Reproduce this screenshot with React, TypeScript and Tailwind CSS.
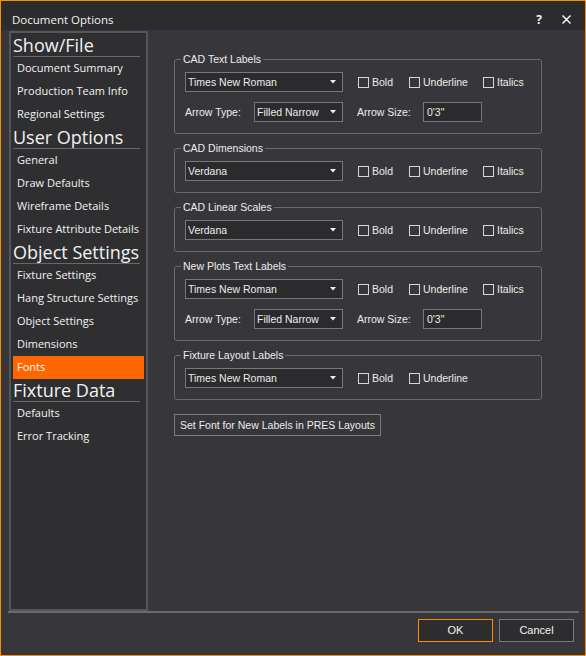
import React from 'react';

const sideGroups = [
  { title: 'Show/File', items: ['Document Summary', 'Production Team Info', 'Regional Settings'] },
  { title: 'User Options', items: ['General', 'Draw Defaults', 'Wireframe Details', 'Fixture Attribute Details'] },
  { title: 'Object Settings', items: ['Fixture Settings', 'Hang Structure Settings', 'Object Settings', 'Dimensions', 'Fonts'] },
  { title: 'Fixture Data', items: ['Defaults', 'Error Tracking'] },
];

const Combo: React.FC<{ width: string; text: string }> = ({ width, text }) => (
  <div className={`${width} h-[20px] flex items-center justify-between pl-[2px] pr-[6px] bg-[#2b2b2d] border border-[#787878]`}>
    <span className="truncate">{text}</span>
    <svg width="6" height="4" viewBox="0 0 6 4" className="shrink-0">
      <path d="M0 0 H6 L3 3.5 Z" fill="#f0f0f0" />
    </svg>
  </div>
);

const Check: React.FC<{ label: string; width?: string }> = ({ label, width = '' }) => (
  <label className={`${width} flex items-center gap-[3px]`}>
    <span className="w-[11px] h-[11px] border border-[#d6d6d6]" />
    <span>{label}</span>
  </label>
);

const FontRow: React.FC<{ font: string; italics?: boolean }> = ({ font, italics = true }) => (
  <div className="flex items-center h-[20px]">
    <Combo width="w-[158px]" text={font} />
    <div className="flex items-center ml-[15px]">
      <Check label="Bold" width="w-[51px]" />
      <Check label="Underline" width="w-[74px]" />
      {italics && <Check label="Italics" />}
    </div>
  </div>
);

const ArrowRow: React.FC = () => (
  <div className="flex items-center h-[20px]">
    <span className="w-[69px]">Arrow Type:</span>
    <Combo width="w-[89px]" text="Filled Narrow" />
    <span className="ml-[14px] w-[66px]">Arrow Size:</span>
    <div className="w-[59px] h-[20px] flex items-center pl-[3px] bg-[#2b2b2d] border border-[#787878]">0'3"</div>
  </div>
);

const GroupBox: React.FC<{ title: string; children: React.ReactNode }> = ({ title, children }) => (
  <div className="relative w-[368px] border border-[#6a6a6a] rounded-[3px] pt-[12px] pb-[11px] pl-[10px] flex flex-col gap-[10px]">
    <span className="absolute -top-[7px] left-[6px] px-[2px] leading-[13px] bg-[#37373b]">{title}</span>
    {children}
  </div>
);

export default function App() {
  return (
    <div className="w-[586px] h-[656px] flex flex-col bg-[#37373b] border border-[#ff8c00] text-[#f2f2f2] overflow-hidden">
      {/* title bar */}
      <div className="h-[29px] shrink-0 flex items-center bg-[#2c2c2f] pt-[8px] pl-[11px] pr-[14px]" style={{ fontFamily: '"Open Sans", sans-serif' }}>
        <span className="text-[11.5px] flex-1">Document Options</span>
        <span className="text-[12px] font-bold mr-[20px]">?</span>
        <svg width="9" height="9" viewBox="0 0 9 9">
          <path d="M0.5 0.5 L8.5 8.5 M8.5 0.5 L0.5 8.5" stroke="#ffffff" strokeWidth="1.4" />
        </svg>
      </div>

      {/* body */}
      <div className="h-[583px] shrink-0 flex ml-[7px] mr-[6px] border-b-2 border-[#6b6b6b]">
        <aside
          className="w-[139px] ml-[1px] mt-[1px] pt-[1px] bg-[#2f2f31] border-2 border-[#565658] flex flex-col"
          style={{ fontFamily: '"Open Sans", sans-serif' }}
        >
          {sideGroups.map((g) => (
            <div key={g.title} className="flex flex-col">
              <div className="h-[23px] ml-[2px] mr-[6px] border-b border-[#68686a] text-[18px] leading-[22px] whitespace-nowrap">
                {g.title}
              </div>
              {g.items.map((it) => (
                <div
                  key={it}
                  className={`h-[23px] mx-[2px] pl-[4px] flex items-center text-[11px] whitespace-nowrap ${
                    it === 'Fonts' ? 'bg-[#ff6600] text-white' : ''
                  }`}
                >
                  {it}
                </div>
              ))}
            </div>
          ))}
        </aside>

        <main
          className="flex-1 pl-[26px] pt-[29px] flex flex-col gap-[14px] text-[10.5px] leading-[13px] text-[#ececec]"
          style={{ fontFamily: '"Liberation Sans", Arial, sans-serif' }}
        >
          <GroupBox title="CAD Text Labels">
            <FontRow font="Times New Roman" />
            <ArrowRow />
          </GroupBox>
          <GroupBox title="CAD Dimensions">
            <FontRow font="Verdana" />
          </GroupBox>
          <GroupBox title="CAD Linear Scales">
            <FontRow font="Verdana" />
          </GroupBox>
          <GroupBox title="New Plots Text Labels">
            <FontRow font="Times New Roman" />
            <ArrowRow />
          </GroupBox>
          <GroupBox title="Fixture Layout Labels">
            <FontRow font="Times New Roman" italics={false} />
          </GroupBox>
          <div className="self-start h-[22px] px-[5px] flex items-center border border-[#7c7c7c] bg-[#37373b]">
            Set Font for New Labels in PRES Layouts
          </div>
        </main>
      </div>

      {/* footer */}
      <div
        className="flex-1 flex justify-end items-start pt-[6px] pr-[11px] gap-[6px] text-[11px]"
        style={{ fontFamily: '"Liberation Sans", Arial, sans-serif' }}
      >
        <button className="w-[75px] h-[23px] border border-[#ff8c00] bg-[#2d2d30]">OK</button>
        <button className="w-[75px] h-[23px] border border-[#7a7a7a] bg-[#2d2d30]">Cancel</button>
      </div>
    </div>
  );
}
